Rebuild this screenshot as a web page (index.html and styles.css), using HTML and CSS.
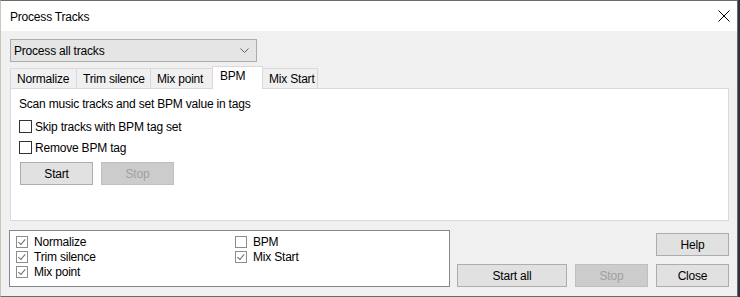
FILE: index.html
```html
<!DOCTYPE html>
<html lang="en">

<head>
    <meta charset="UTF-8">
    <title>Process Tracks</title>
    <link rel="stylesheet" href="styles.css">
</head>

<body>
    <div class="window">
        <div class="titlebar">
            <span class="title">Process Tracks</span>
            <svg class="close-x" width="12" height="12" viewBox="0 0 12 12">
                <path d="M0.5 0.5 L11.5 11.5 M11.5 0.5 L0.5 11.5" stroke="#000" stroke-width="1" fill="none" />
            </svg>
        </div>
        <div class="content">
            <div class="combo">
                <span>Process all tracks</span>
                <svg class="chev" width="9" height="5" viewBox="0 0 9 5">
                    <path d="M0.5 0.5 L4.5 4.5 L8.5 0.5" stroke="#606060" stroke-width="1" fill="none" />
                </svg>
            </div>
            <div class="tabs">
                <div class="tab w1">Normalize</div>
                <div class="tab w2">Trim silence</div>
                <div class="tab w3">Mix point</div>
                <div class="tab w4 active">BPM</div>
                <div class="tab w5">Mix Start</div>
            </div>
            <div class="panel">
                <div class="desc">Scan music tracks and set BPM value in tags</div>
                <label class="check first"><span class="box"></span>Skip tracks with BPM tag set</label>
                <label class="check"><span class="box"></span>Remove BPM tag</label>
                <div class="btnrow">
                    <div class="btn">Start</div>
                    <div class="btn disabled">Stop</div>
                </div>
            </div>
            <div class="bottom">
                <div class="list">
                    <div class="item"><span class="lbox on"></span>Normalize</div>
                    <div class="item"><span class="lbox on"></span>Trim silence</div>
                    <div class="item"><span class="lbox on"></span>Mix point</div>
                    <div class="item"><span class="lbox"></span>BPM</div>
                    <div class="item"><span class="lbox on"></span>Mix Start</div>
                </div>
                <div class="actions">
                    <div class="btn help">Help</div>
                    <div class="btn startall">Start all</div>
                    <div class="btn disabled stopall">Stop</div>
                    <div class="btn closebtn">Close</div>
                </div>
            </div>
        </div>
    </div>
</body>

</html>
```

FILE: styles.css
```css
body {
    margin: 0;
    background: #2e3040;
    font-family: "Liberation Sans", Arial, sans-serif;
    font-size: 12px;
    letter-spacing: -0.2px;
    color: #000;
}

.window {
    width: 738px;
    height: 297px;
    box-sizing: border-box;
    border: 1px solid #6a6a6a;
    border-left-color: #c8c8b8;
    background: #f0f0f0;
}

.titlebar {
    height: 30px;
    background: #fff;
    display: flex;
    align-items: center;
    padding-left: 9px;
}

.title {
    flex: 1;
    padding-top: 1px;
}

.close-x {
    margin-right: 7px;
}

.content {
    padding: 8px 8px 0 9px;
}

.combo {
    width: 247px;
    height: 23px;
    box-sizing: border-box;
    border: 1px solid #adadad;
    background: #e5e5e5;
    display: flex;
    align-items: center;
    justify-content: space-between;
    padding: 0 7px 0 3px;
}

.tabs {
    margin-top: 4px;
    height: 22px;
    display: flex;
    align-items: flex-end;
}

.tab {
    height: 20px;
    box-sizing: border-box;
    border: 1px solid #d9d9d9;
    border-bottom: none;
    border-right: none;
    padding: 3px 0 0 6px;
    background: #f0f0f0;
}

.tab.w1 { width: 66px; }
.tab.w2 { width: 74px; }
.tab.w3 { width: 62px; }
.tab.w4 { width: 51px; }
.tab.w5 { width: 55px; border-right: 1px solid #d9d9d9; }

.tab.active {
    height: 23px;
    margin-bottom: -1px;
    background: #fff;
    border-right: 1px solid #d9d9d9;
    padding: 2px 0 0 7px;
    position: relative;
}

.tab.active + .tab {
    border-left: none;
}

.panel {
    width: 719px;
    height: 133px;
    box-sizing: border-box;
    border: 1px solid #d9d9d9;
    background: #fff;
    padding: 8px 8px 0 8px;
}

.desc {
    line-height: 15px;
}

.check {
    display: flex;
    align-items: center;
    height: 17px;
    margin-top: 4px;
}

.check.first {
    margin-top: 6px;
}

.box {
    width: 13px;
    height: 13px;
    box-sizing: border-box;
    border: 1px solid #333;
    background: #fff;
    margin-right: 3px;
}

.btnrow {
    display: flex;
    gap: 8px;
    margin-top: 6px;
    padding-left: 1px;
}

.btn {
    width: 73px;
    height: 23px;
    box-sizing: border-box;
    border: 1px solid #adadad;
    background: #e1e1e1;
    display: flex;
    align-items: center;
    justify-content: center;
}

.btn.disabled {
    background: #cccccc;
    border-color: #bfbfbf;
    color: #a0a0a0;
}

.bottom {
    display: flex;
    margin-top: 9px;
    margin-left: -1px;
}

.list {
    width: 441px;
    height: 57px;
    box-sizing: border-box;
    border: 1px solid #828790;
    background: #fff;
    padding: 3px 0 0 6px;
    display: grid;
    grid-auto-flow: column;
    grid-template-rows: repeat(3, 15px);
    grid-template-columns: 219px auto;
    align-content: start;
}

.item {
    display: flex;
    align-items: center;
}

.lbox {
    width: 12px;
    height: 12px;
    box-sizing: border-box;
    border: 1px solid #8c8c8c;
    background: #fff;
    margin-right: 6px;
    position: relative;
}

.lbox.on::after {
    content: "";
    position: absolute;
    left: 2px;
    top: 0px;
    width: 3px;
    height: 6px;
    border: solid #6a6a6a;
    border-width: 0 1px 1px 0;
    transform: rotate(40deg) translate(1px, 0);
}

.actions {
    margin-left: 7px;
    padding-top: 3px;
    display: grid;
    grid-template-columns: 110px 73px 73px;
    grid-template-rows: 23px 23px;
    column-gap: 8px;
    row-gap: 8px;
}

.btn.help {
    grid-column: 3;
    grid-row: 1;
}

.btn.startall {
    width: 110px;
    grid-column: 1;
    grid-row: 2;
}

.btn.stopall {
    grid-column: 2;
    grid-row: 2;
}

.btn.closebtn {
    grid-column: 3;
    grid-row: 2;
}
```
